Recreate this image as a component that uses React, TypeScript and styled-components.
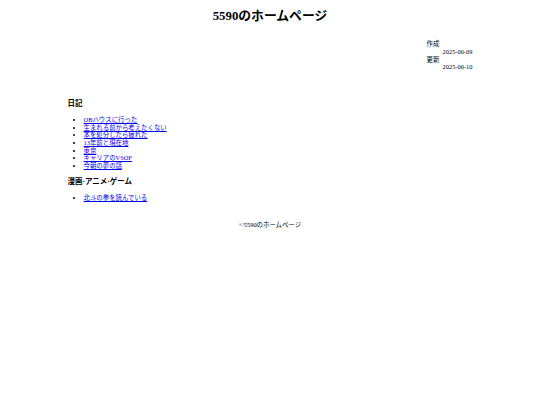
import React from "react"
import styled, { createGlobalStyle } from "styled-components"

const GlobalStyle = createGlobalStyle`
  html, body {
    margin: 0;
    padding: 0;
    background: #ffffff;
  }
  body {
    font-family: "Liberation Serif", "Noto Sans CJK JP", serif;
    color: #000000;
  }
`

// the reference is a 1350px wide page shown at 40%
const Page = styled.div`
  zoom: 0.4;
  width: 1350px;
  padding: 0 8px;
  box-sizing: border-box;
  font-size: 16px;
  line-height: 19.2px;
`

const Header = styled.header`
  padding-top: 21.4px;
`

const Title = styled.h1`
  margin: 0;
  font-size: 32px;
  line-height: 37px;
  font-weight: bold;
  text-align: center;
`

const Container = styled.div`
  max-width: 1012px;
  margin: 0 auto;
`

const MetaRow = styled.div`
  display: flex;
  justify-content: flex-end;
  margin-top: 42px;
`

const Meta = styled.dl`
  margin: 0;
`

const MetaLabel = styled.dt`
  margin: 0;
`

const MetaValue = styled.dd`
  margin: 0 0 0 40px;
`

const Section = styled.section<{ $first?: boolean }>`
  margin-top: ${props => (props.$first ? "72px" : "20px")};
`

const SectionTitle = styled.h3`
  margin: 0;
  font-size: 18.72px;
  line-height: 22px;
  font-weight: bold;
`

const List = styled.ul`
  margin: 18.8px 0 0;
  padding-left: 40px;
  list-style: disc;
`

const Item = styled.li``

const EntryLink = styled.a`
  color: #0000ee;
  text-decoration: underline;
`

const Footer = styled.footer`
  margin-top: 47px;
  text-align: center;
`

const diary = [
  "OBハウスに行った",
  "生まれる前から考えたくない",
  "本を処分したら疲れた",
  "13年前と現在地",
  "東京",
  "キャリアのVSOP",
  "今朝の夢の話",
]

const manga = ["北斗の拳を読んでいる"]

const App: React.FC = () => (
  <>
    <GlobalStyle />
    <Page>
      <Header>
        <Title>5590のホームページ</Title>
      </Header>
      <Container>
        <MetaRow>
          <Meta>
            <MetaLabel>作成</MetaLabel>
            <MetaValue>2025-06-09</MetaValue>
            <MetaLabel>更新</MetaLabel>
            <MetaValue>2025-06-10</MetaValue>
          </Meta>
        </MetaRow>
        <Section $first>
          <SectionTitle>日記</SectionTitle>
          <List>
            {diary.map(title => (
              <Item key={title}>
                <EntryLink href="#">{title}</EntryLink>
              </Item>
            ))}
          </List>
        </Section>
        <Section>
          <SectionTitle>漫画·アニメ·ゲーム</SectionTitle>
          <List>
            {manga.map(title => (
              <Item key={title}>
                <EntryLink href="#">{title}</EntryLink>
              </Item>
            ))}
          </List>
        </Section>
      </Container>
      <Footer>©5590のホームページ</Footer>
    </Page>
  </>
)

export default App
